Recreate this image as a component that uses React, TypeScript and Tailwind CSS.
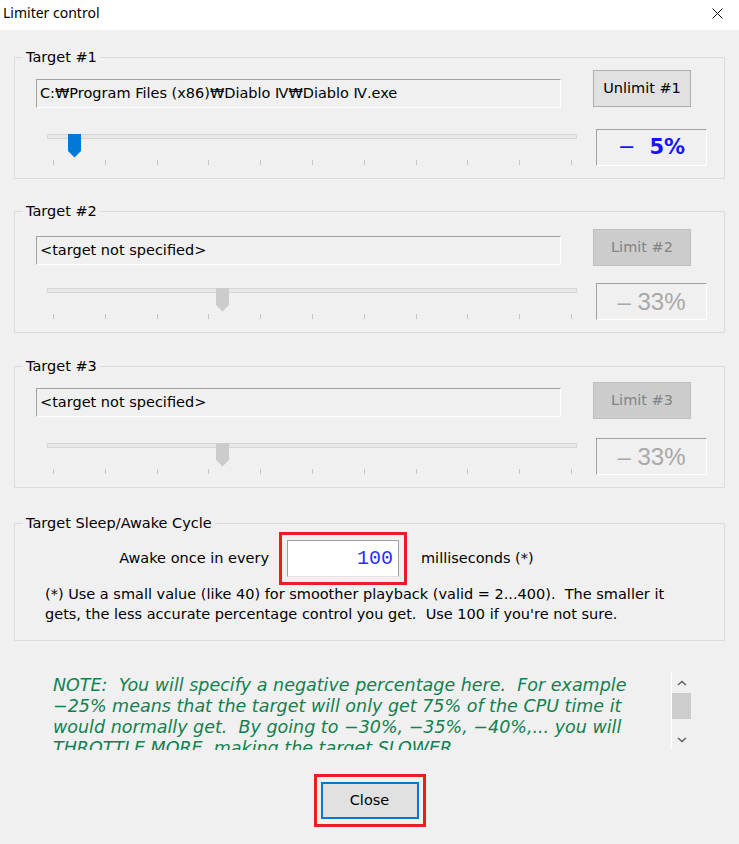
import React from "react";

const sans = "font-['DejaVu_Sans','Liberation_Sans',sans-serif]";

type TargetProps = {
  n: number;
  path: string;
  active: boolean;
  thumbLeft: number;
  percent: string;
  rowClass: string;
  fieldClass: string;
  sliderClass: string;
  groupClass: string;
};

function Group({ title, className, children }: { title: string; className: string; children: React.ReactNode }) {
  return (
    <div className={"border border-[#dcdcdc] " + className}>
      <div className="-mt-[9px] ml-[8px] w-fit bg-[#f0f0f0] px-[3px] leading-[16px] text-black">{title}</div>
      {children}
    </div>
  );
}

function Thumb({ active }: { active: boolean }) {
  return (
    <svg width="13" height="24" viewBox="0 0 13 24">
      <path d="M0 0 H13 V17 L6.5 23.5 L0 17 Z" fill={active ? "#0078d7" : "#cccccc"} />
    </svg>
  );
}

function Slider({ active, thumbLeft }: { active: boolean; thumbLeft: number }) {
  const ticks = Array.from({ length: 11 });
  return (
    <div className="w-[530px]">
      <div className="relative h-[24px]">
        <div className="mt-[8px] h-[5px] border border-[#d6d6d6] bg-[#e7e7e7]" />
        {/* thumb sits on top of the track */}
        <div className="absolute top-0" style={{ left: thumbLeft }}>
          <Thumb active={active} />
        </div>
      </div>
      <div className="mt-[2px] ml-[6px] flex w-[519px] justify-between">
        {ticks.map((_, i) => (
          <div key={i} className="h-[5px] w-px bg-[#c4c4c4]" />
        ))}
      </div>
    </div>
  );
}

function Target(p: TargetProps) {
  return (
    <Group title={`Target #${p.n}`} className={p.groupClass}>
      <div className={"flex items-start pl-[21px] " + p.rowClass}>
        <div
          className={
            "flex h-[29px] w-[525px] items-center border border-t-[#a0a0a0] border-l-[#a0a0a0] border-b-white border-r-white pl-[3px] text-black " +
            p.fieldClass
          }
        >
          {p.path}
        </div>
        <div
          className={
            "ml-[32px] flex h-[37px] w-[98px] items-center justify-center border " +
            (p.active ? "border-[#adadad] bg-[#e1e1e1] text-black" : "border-[#bfbfbf] bg-[#cccccc] text-[#838383]")
          }
        >
          {p.active ? `Unlimit #${p.n}` : `Limit #${p.n}`}
        </div>
      </div>
      <div className={"flex items-start pb-[12px] pl-[32px] " + p.sliderClass}>
        <Slider active={p.active} thumbLeft={p.thumbLeft} />
        <div
          className={
            "mt-[3px] ml-[19px] flex h-[37px] w-[111px] items-center justify-center border border-t-[#a0a0a0] border-l-[#a0a0a0] border-b-white border-r-white whitespace-pre " +
            (p.active
              ? "text-[21px] text-[#1414ff]"
              : "font-['Liberation_Sans',sans-serif] text-[24px] text-[#a8a8a8]")
          }
        >
          {p.active ? (
            <>
              <span>{"\u2212 "}</span>
              <span className="font-bold">{p.percent}</span>
            </>
          ) : (
            "\u2013 " + p.percent
          )}
        </div>
      </div>
    </Group>
  );
}

function Chevron({ up }: { up: boolean }) {
  return (
    <svg width="10" height="6" viewBox="0 0 10 6">
      <path
        d={up ? "M1 5 L5 1.5 L9 5" : "M1 1 L5 4.5 L9 1"}
        fill="none"
        stroke="#606060"
        strokeWidth="1.5"
      />
    </svg>
  );
}

const noteLines = [
  "NOTE:  You will specify a negative percentage here.  For example",
  "\u221225% means that the target will only get 75% of the CPU time it",
  "would normally get.  By going to \u221230%, \u221235%, \u221240%,... you will",
  "THROTTLE MORE, making the target SLOWER.",
];

export default function App() {
  return (
    <div className={"h-[844px] w-[739px] overflow-hidden bg-[#f0f0f0] text-[14.5px] " + sans}>
      <div className="flex h-[30px] items-start justify-between bg-white">
        <span className="pt-[4px] pl-[3px] font-['Noto_Sans',sans-serif] text-[14px] leading-[18px] text-black">
          Limiter control
        </span>
        <svg className="mt-[8px] mr-[16px]" width="11" height="11" viewBox="0 0 11 11">
          <path d="M0.5 0.5 L10.5 10.5 M10.5 0.5 L0.5 10.5" stroke="#111" strokeWidth="1" />
        </svg>
      </div>

      <div className="ml-[14px] w-[711px]">
        <Target
          n={1}
          path={"C:\u20a9Program Files (x86)\u20a9Diablo \u2163\u20a9Diablo \u2163.exe"}
          active
          thumbLeft={21}
          percent=" 5%"
          groupClass="mt-[27px]"
          rowClass="mt-[5px]"
          fieldClass="mt-[9px]"
          sliderClass="mt-[18px]"
        />
        <Target
          n={2}
          path="<target not specified>"
          active={false}
          thumbLeft={169}
          percent="33%"
          groupClass="mt-[32px]"
          rowClass="mt-[10px]"
          fieldClass="mt-[7px]"
          sliderClass="mt-[14px]"
        />
        <Target
          n={3}
          path="<target not specified>"
          active={false}
          thumbLeft={169}
          percent="33%"
          groupClass="mt-[33px]"
          rowClass="mt-[8px]"
          fieldClass="mt-[6px]"
          sliderClass="mt-[16px]"
        />

        <Group title="Target Sleep/Awake Cycle" className="mt-[35px] pb-[16px]">
          <div className="mt-[1px] flex items-center">
            <div className="w-[254px] text-right text-black">Awake once in every</div>
            <div className="ml-[10px] border-[3px] border-[#ec1c24] p-[5px]">
              <div className="flex h-[37px] w-[112px] items-center justify-end border border-[#a0a0a0] border-b-[#e3e3e3] bg-white pr-[5px] font-['Liberation_Mono',monospace] text-[20px] text-[#2b2bff]">
                100
              </div>
            </div>
            <div className="ml-[14px] text-black">milliseconds (*)</div>
          </div>
          <div className="-mt-[1px] pl-[30px] leading-[20px] whitespace-pre text-black">
            {"(*) Use a small value (like 40) for smoother playback (valid = 2...400).  The smaller it\ngets, the less accurate percentage control you get.  Use 100 if you're not sure."}
          </div>
        </Group>
      </div>

      <div className="mt-[31px] ml-[48px] flex h-[78px] w-[643px]">
        <div className="flex-1 overflow-hidden pt-[3px] pl-[5px] text-[17.5px] leading-[21px] italic whitespace-pre text-[#12804f]">
          {noteLines.map((l) => (
            <div key={l}>{l}</div>
          ))}
        </div>
        <div className="flex w-[20px] flex-col border-l border-white">
          <div className="flex h-[21px] items-center justify-center">
            <Chevron up />
          </div>
          <div className="h-[26px] bg-[#cdcdcd]" />
          <div className="flex-1" />
          <div className="flex h-[21px] items-center justify-center">
            <Chevron up={false} />
          </div>
        </div>
      </div>

      <div className="mt-[24px] flex justify-center">
        <div className="flex h-[53px] w-[112px] items-center justify-center border-[3px] border-[#ec1c24]">
          <button className="flex h-[37px] w-[98px] items-center justify-center border-2 border-[#0078d7] bg-[#e1e1e1] text-black">
            Close
          </button>
        </div>
      </div>
    </div>
  );
}
